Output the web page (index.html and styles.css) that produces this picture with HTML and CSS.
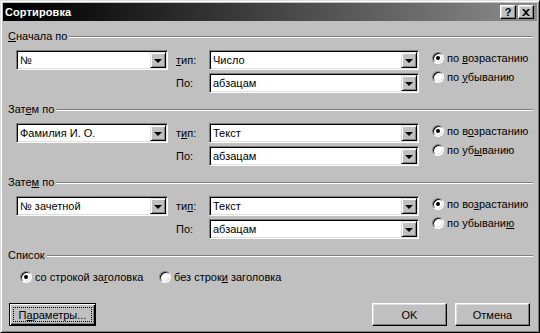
FILE: index.html
```html
<!DOCTYPE html>
<html lang="ru">
<head>
<meta charset="utf-8">
<title>Сортировка</title>
<link rel="stylesheet" href="styles.css">
</head>
<body>
<div class="window">
  <div class="titlebar">
    <span class="title">Сортировка</span>
    <div class="tb-buttons">
      <span class="tb-btn help">?</span>
      <span class="tb-btn close"><svg width="8" height="7" viewBox="0 0 8 7"><path d="M0 0h2l2 2 2-2h2L5 3.5 8 7H6L4 5 2 7H0l3-3.5z" fill="#000"/></svg></span>
    </div>
  </div>
  <div class="content">
    <section class="group">
      <div class="group-head"><span class="gtitle"><u>С</u>начала по</span></div>
      <div class="group-body">
        <div class="combo c-key"><span class="val">№</span><span class="drop"><i class="tri"></i></span></div>
        <span class="lbl r1"><u>т</u>ип:</span>
        <div class="combo c-type r1"><span class="val">Число</span><span class="drop"><i class="tri"></i></span></div>
        <div class="radios">
          <div class="radio-row"><span class="radio on"></span><span>по <u>в</u>озрастанию</span></div>
          <div class="radio-row"><span class="radio"></span><span>по <u>у</u>быванию</span></div>
        </div>
        <span class="lbl r2">По:</span>
        <div class="combo c-type r2"><span class="val">абзацам</span><span class="drop"><i class="tri"></i></span></div>
      </div>
    </section>
    <section class="group">
      <div class="group-head"><span class="gtitle">Зат<u>е</u>м по</span></div>
      <div class="group-body">
        <div class="combo c-key"><span class="val">Фамилия И. О.</span><span class="drop"><i class="tri"></i></span></div>
        <span class="lbl r1">т<u>и</u>п:</span>
        <div class="combo c-type r1"><span class="val">Текст</span><span class="drop"><i class="tri"></i></span></div>
        <div class="radios">
          <div class="radio-row"><span class="radio on"></span><span>по в<u>о</u>зрастанию</span></div>
          <div class="radio-row"><span class="radio"></span><span>по уб<u>ы</u>ванию</span></div>
        </div>
        <span class="lbl r2">По:</span>
        <div class="combo c-type r2"><span class="val">абзацам</span><span class="drop"><i class="tri"></i></span></div>
      </div>
    </section>
    <section class="group">
      <div class="group-head"><span class="gtitle">Зате<u>м</u> по</span></div>
      <div class="group-body">
        <div class="combo c-key"><span class="val">№ зачетной</span><span class="drop"><i class="tri"></i></span></div>
        <span class="lbl r1">ти<u>п</u>:</span>
        <div class="combo c-type r1"><span class="val">Текст</span><span class="drop"><i class="tri"></i></span></div>
        <div class="radios">
          <div class="radio-row"><span class="radio on"></span><span>по во<u>з</u>растанию</span></div>
          <div class="radio-row"><span class="radio"></span><span>по убывани<u>ю</u></span></div>
        </div>
        <span class="lbl r2">По:</span>
        <div class="combo c-type r2"><span class="val">абзацам</span><span class="drop"><i class="tri"></i></span></div>
      </div>
    </section>
    <section class="list-group">
      <div class="group-head"><span class="gtitle">Список</span></div>
      <div class="list-opts">
        <div class="radio-row first"><span class="radio on"></span><span>со строкой за<u>г</u>оловка</span></div>
        <div class="radio-row"><span class="radio"></span><span>без строк<u>и</u> заголовка</span></div>
      </div>
    </section>
    <div class="buttons">
      <div class="btn focused params"><span class="focus">П<u>а</u>раметры...</span></div>
      <div class="spacer"></div>
      <div class="btn ok"><span class="focus nf">OK</span></div>
      <div class="btn cancel"><span class="focus nf">Отмена</span></div>
    </div>
  </div>
</div>
</body>
</html>
```

FILE: styles.css
```css
html, body {
  margin: 0;
  padding: 0;
  background: #c0c0c0;
}
body {
  font-family: "Liberation Sans", Arial, sans-serif;
  font-size: 11px;
  color: #000;
}
u {
  text-underline-offset: 1px;
}
.window {
  width: 540px;
  height: 333px;
  box-sizing: border-box;
  background: #c0c0c0;
  border: 1px solid;
  border-color: #dfdfdf #000 #000 #dfdfdf;
  box-shadow: inset 1px 1px #fff, inset -1px -1px #808080;
  padding: 2px;
  display: flex;
  flex-direction: column;
}
.titlebar {
  height: 18px;
  display: flex;
  align-items: center;
  justify-content: space-between;
  padding: 0 3px 0 2px;
  background: linear-gradient(to right, #000 0%, #101010 15%, #8c8c8c 100%);
}
.title {
  color: #fff;
  font-weight: bold;
  font-size: 11px;
  letter-spacing: 0.1px;
}
.tb-buttons {
  display: flex;
  gap: 2px;
}
.tb-btn {
  width: 16px;
  height: 14px;
  box-sizing: border-box;
  background: #c0c0c0;
  border: 1px solid;
  border-color: #fff #000 #000 #fff;
  box-shadow: inset -1px -1px #808080, inset 1px 1px #dfdfdf;
  display: flex;
  align-items: center;
  justify-content: center;
  font-weight: bold;
  font-size: 11px;
  line-height: 1;
}
.content {
  flex: 1;
  padding: 9px 4px 0 5px;
  display: flex;
  flex-direction: column;
}
.group-head {
  height: 13px;
  display: flex;
  align-items: center;
  line-height: 13px;
}
.group-head::after {
  content: "";
  flex: 1;
  height: 0;
  border-top: 1px solid #808080;
  border-bottom: 1px solid #fff;
  margin-left: 2px;
}
.group {
  margin-bottom: 10px;
}
.group-body {
  margin-top: 7px;
  padding-left: 8px;
  display: grid;
  grid-template-columns: 152px 41px 210px 1fr;
  grid-template-rows: 20px 20px;
  row-gap: 3px;
}
.c-key { grid-column: 1; grid-row: 1; }
.lbl {
  grid-column: 2;
  padding-left: 8px;
  display: flex;
  align-items: center;
}
.lbl.r1 { grid-row: 1; }
.lbl.r2 { grid-row: 2; }
.c-type { grid-column: 3; }
.c-type.r1 { grid-row: 1; }
.c-type.r2 { grid-row: 2; }
.radios {
  grid-column: 4;
  grid-row: 1 / 3;
  padding-left: 13px;
  margin-top: -2px;
  display: flex;
  flex-direction: column;
}
.combo {
  box-sizing: border-box;
  height: 20px;
  background: #fff;
  border: 1px solid;
  border-color: #808080 #fff #fff #808080;
  box-shadow: inset 1px 1px #000, inset -1px -1px #dfdfdf;
  padding: 1px;
  display: flex;
  align-items: center;
}
.combo .val {
  flex: 1;
  padding-left: 2px;
  white-space: nowrap;
  overflow: hidden;
}
.drop {
  width: 16px;
  height: 16px;
  box-sizing: border-box;
  background: #c0c0c0;
  border: 1px solid;
  border-color: #dfdfdf #000 #000 #dfdfdf;
  box-shadow: inset 1px 1px #fff, inset -1px -1px #808080;
  display: flex;
  align-items: center;
  justify-content: center;
}
.tri {
  display: block;
  width: 0;
  height: 0;
  border-left: 4px solid transparent;
  border-right: 4px solid transparent;
  border-top: 4px solid #000;
  margin-top: 1px;
}
.radio-row {
  height: 19px;
  display: flex;
  align-items: center;
  gap: 3px;
  white-space: nowrap;
}
.radio {
  width: 12px;
  height: 12px;
  box-sizing: border-box;
  border-radius: 50%;
  background: #fff;
  border: 1px solid;
  border-color: #808080 #fff #fff #808080;
  box-shadow: inset 1px 1px #000, inset -1px -1px #dfdfdf;
  display: flex;
  align-items: center;
  justify-content: center;
  flex: none;
}
.radio.on::after {
  content: "";
  width: 4px;
  height: 4px;
  border-radius: 50%;
  background: #000;
}
.list-opts {
  margin-top: 5px;
  padding-left: 12px;
  display: flex;
}
.list-opts .first {
  width: 139px;
}
.buttons {
  margin-top: 17px;
  padding-left: 1px;
  padding-right: 3px;
  display: flex;
  gap: 8px;
}
.spacer { flex: 1; }
.btn {
  height: 23px;
  box-sizing: border-box;
  background: #c0c0c0;
  border: 1px solid;
  border-color: #fff #000 #000 #fff;
  box-shadow: inset -1px -1px #808080, inset 1px 1px #dfdfdf;
  padding: 3px;
  display: flex;
}
.btn.params { width: 87px; }
.btn.ok, .btn.cancel { width: 75px; }
.btn.focused {
  border-color: #000;
  box-shadow: inset 1px 1px #fff, inset -1px -1px #000, inset -2px -2px #808080;
}
.focus {
  flex: 1;
  border: 1px dotted #000;
  display: flex;
  align-items: center;
  justify-content: center;
}
.focus.nf {
  border-color: transparent;
}
```
